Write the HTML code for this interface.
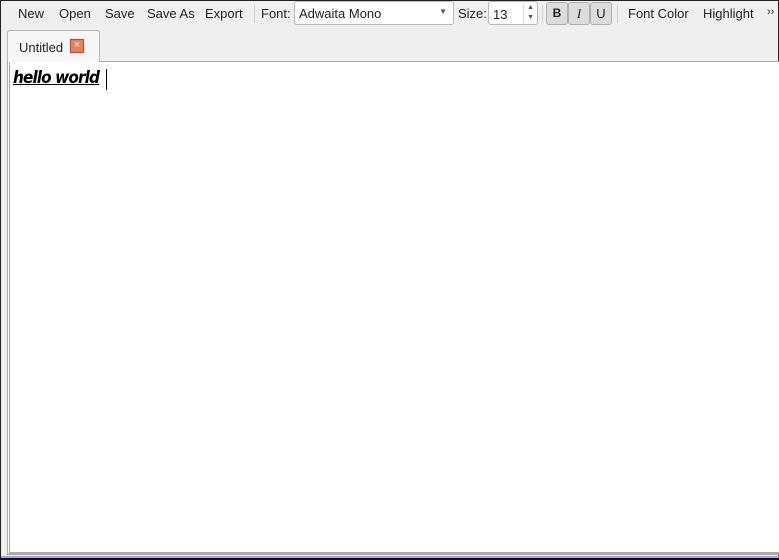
<!DOCTYPE html>
<html><head><meta charset="utf-8"><style>
*{box-sizing:border-box;margin:0;padding:0}
body{width:779px;height:560px;background:#efefef;font-family:"Liberation Sans",sans-serif;font-size:13px;color:#222;position:relative;overflow:hidden}
.frame{position:absolute;left:0;top:0;width:779px;height:560px;border:1px solid #222;border-bottom:none}
.tb{position:absolute;top:0;left:0;height:28px;width:779px}
.t{position:absolute;top:6px;font-size:13px}
.sep{position:absolute;top:5px;width:1px;height:18px;background:#d0d0d0}
.combo{position:absolute;left:294px;top:1px;width:160px;height:24px;background:#fff;border:1px solid #b8b8b8;border-radius:3px}
.spin{position:absolute;left:488px;top:1px;width:50px;height:24px;background:#fff;border:1px solid #b8b8b8;border-radius:3px}
.btn{position:absolute;top:2px;width:22px;height:23px;background:#dcdcdc;border:1px solid #b0b0b0;border-radius:3px;text-align:center;line-height:21px}
.tab{position:absolute;left:7px;top:30px;width:93px;height:32px;background:#f7f7f7;border:1px solid #b5b5b5;border-bottom:none;border-radius:3px 3px 0 0}
.x{position:absolute;left:70px;top:39px;width:14px;height:14px;background:#e9805a;border:1px solid #d04030;color:#fff;font-size:11px;line-height:11px;text-align:center}
.ed{position:absolute;left:7px;top:61px;width:772px;height:494px;background:#fff;border:1px solid #aaa;border-right:none;border-bottom:3px solid #aaa;border-left:3px double #aaa}
.hw{position:absolute;left:13px;top:68px;font-family:"DejaVu Sans Condensed","DejaVu Sans",sans-serif;font-weight:bold;font-style:italic;font-size:17px;text-decoration:underline;color:#000;letter-spacing:-0.9px}
.cur{position:absolute;left:106px;top:69px;width:1px;height:21px;background:#000}
.purple{position:absolute;left:1px;top:556px;width:778px;height:2px;background:#b29ee6}
.blk{position:absolute;left:0;top:558px;width:779px;height:2px;background:#111}
</style></head><body>
<div class="frame"></div>
<div class="tb">
<span class="t" style="left:18px">New</span>
<span class="t" style="left:59px">Open</span>
<span class="t" style="left:105px">Save</span>
<span class="t" style="left:147px">Save As</span>
<span class="t" style="left:205px">Export</span>
<div class="sep" style="left:254px"></div>
<span class="t" style="left:261px">Font:</span>
<div class="combo"><span style="position:absolute;left:4px;top:4px">Adwaita Mono</span><span style="position:absolute;right:6px;top:5px;font-size:8px;color:#555">▼</span></div>
<span class="t" style="left:458px">Size:</span>
<div class="spin"><span style="position:absolute;left:4px;top:5px">13</span><span style="position:absolute;right:3px;top:1px;font-size:7px;color:#555;line-height:10px;border-left:1px solid #ddd;padding-left:3px">▲<br>▼</span></div>
<div class="sep" style="left:542px"></div>
<div class="btn" style="left:546px;font-weight:bold;font-size:12px">B</div>
<div class="btn" style="left:568px;font-style:italic;font-family:'Liberation Serif',serif">I</div>
<div class="btn" style="left:590px">U</div>
<div class="sep" style="left:617px"></div>
<span class="t" style="left:628px">Font Color</span>
<span class="t" style="left:703px">Highlight</span>
<span class="t" style="left:767px;font-size:11px;top:6px">››</span>
</div>
<div class="ed"></div>
<div class="tab"><span style="position:absolute;left:11px;top:9px">Untitled</span></div>
<div class="x">×</div>
<div class="hw">hello world</div>
<div class="cur"></div>
<div class="purple"></div>
<div class="blk"></div>
</body></html>
